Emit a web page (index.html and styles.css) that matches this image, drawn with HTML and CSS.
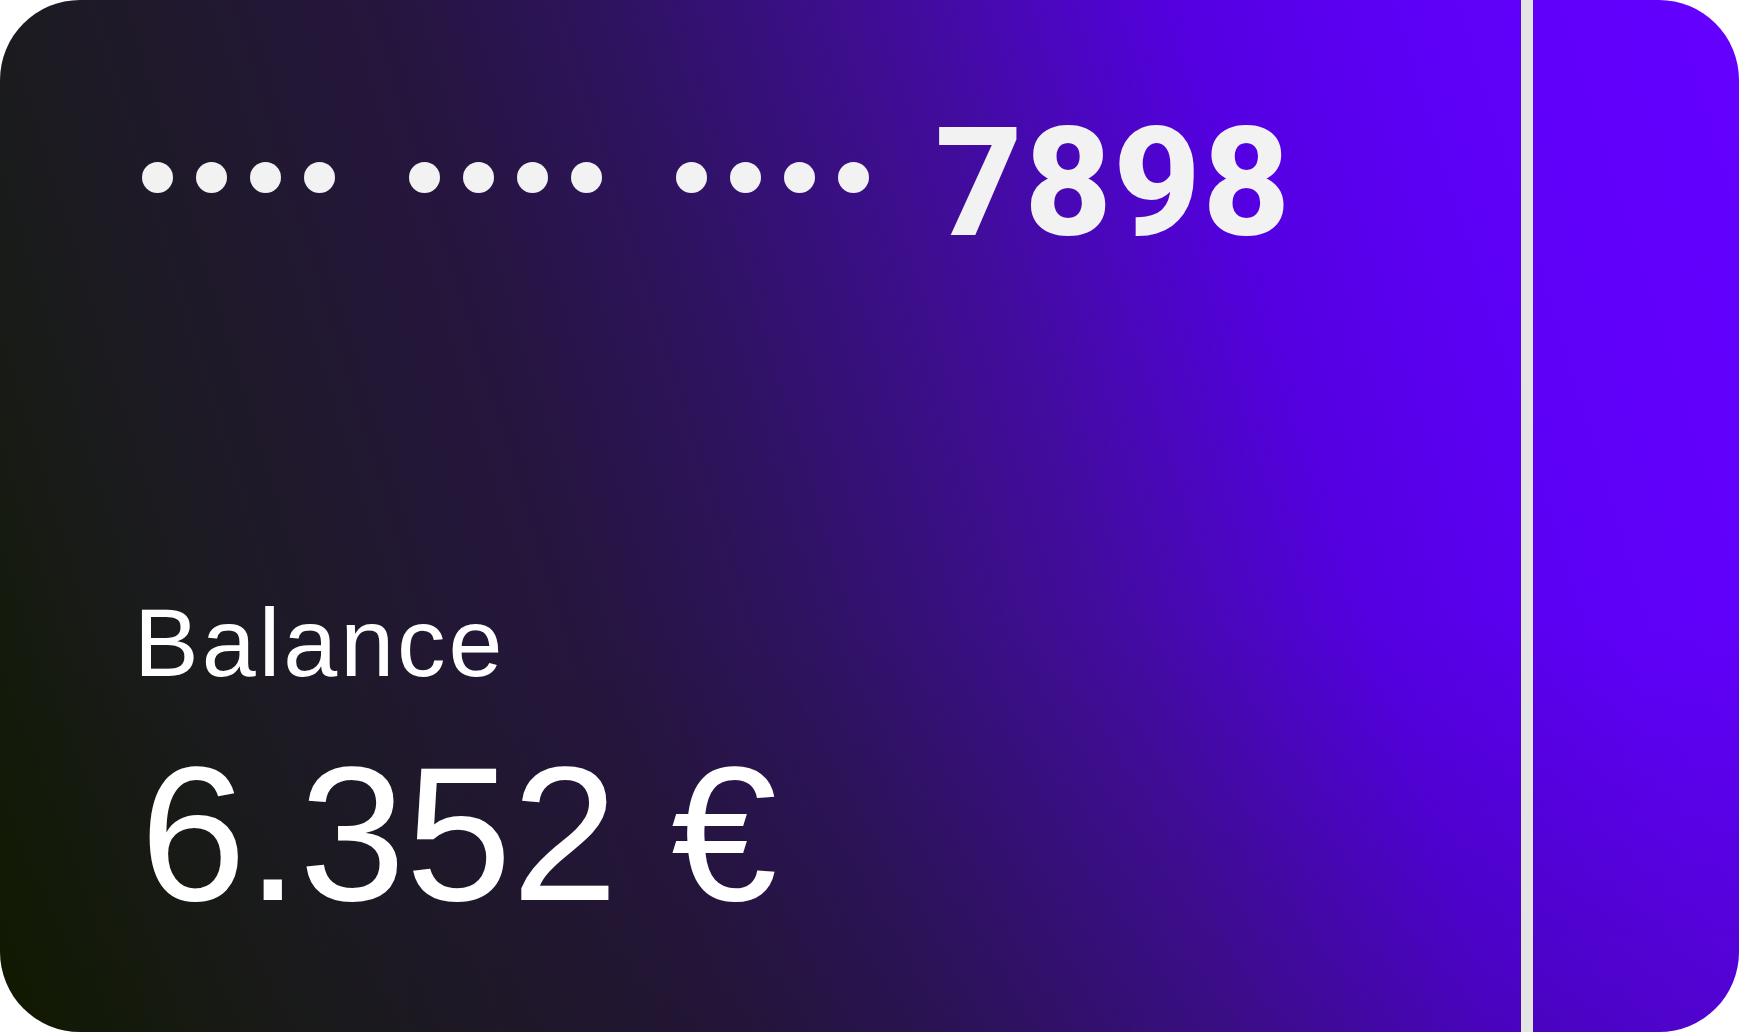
FILE: index.html
```html
<!DOCTYPE html>
<html lang="en">
<head>
<meta charset="utf-8">
<title>Card</title>
<link rel="stylesheet" href="styles.css">
</head>
<body>
<div class="card">
  <div class="card-main">
    <div class="number-row" aria-label="Card number ending in 7898">
      <div class="dot-group"><span class="dot"></span><span class="dot"></span><span class="dot"></span><span class="dot"></span></div>
      <div class="dot-group"><span class="dot"></span><span class="dot"></span><span class="dot"></span><span class="dot"></span></div>
      <div class="dot-group"><span class="dot"></span><span class="dot"></span><span class="dot"></span><span class="dot"></span></div>
      <span class="last-digits">7898</span>
    </div>
    <div class="balance">
      <div class="balance-label">Balance</div>
      <div class="balance-amount">6.352 €</div>
    </div>
  </div>
  <div class="stripe"></div>
  <div class="card-side"></div>
</div>
</body>
</html>
```
FILE: styles.css
```css
html, body {
  margin: 0;
  padding: 0;
  background: #ffffff;
}

.card {
  width: 100%;
  height: 100vh;
  border-radius: 80px;
  overflow: hidden;
  display: grid;
  grid-template-columns: 1521px 12px 1fr;
  background:
    linear-gradient(to top, rgba(16, 20, 0, 0.16) 0%, rgba(16, 20, 0, 0) 40%),
    linear-gradient(73deg,
      #101a00 0%,
      #1b1b1f 15%,
      #261540 35%,
      #2e1360 45%,
      #420c9e 60%,
      #5400e2 73%,
      #5e00f8 85%,
      #6400ff 100%);
}

.card-main {
  display: flex;
  flex-direction: column;
  justify-content: space-between;
  padding: 107px 0 103px 134px;
}

.number-row {
  display: flex;
  align-items: flex-start;
  gap: 74px;
  padding-left: 8px;
}

.dot-group {
  display: flex;
  gap: 23px;
  margin-top: 55px;
}

.dot {
  width: 31px;
  height: 31px;
  border-radius: 50%;
  background: #f2f2f2;
}

.last-digits {
  font-family: Roboto, "Liberation Sans", sans-serif;
  font-weight: 800;
  font-size: 152px;
  line-height: 1;
  letter-spacing: 1.5px;
  color: #f2f2f2;
  margin-left: -8px;
}

.balance {
  display: flex;
  flex-direction: column;
  gap: 47px;
  color: #ffffff;
  font-family: "Liberation Sans", Arial, sans-serif;
}

.balance-label {
  font-size: 97px;
  line-height: 1;
  letter-spacing: 3px;
}

.balance-amount {
  font-size: 191px;
  line-height: 1;
  margin-left: 6px;
}

.stripe {
  background: #e4e4e4;
}

.card-side {
  min-width: 0;
}
```
